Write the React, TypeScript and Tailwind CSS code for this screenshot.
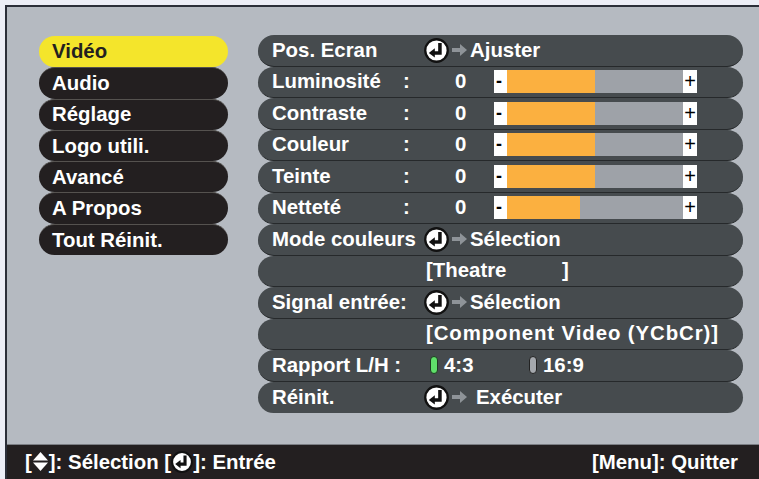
import React from "react";

const menu = ["Vidéo", "Audio", "Réglage", "Logo utili.", "Avancé", "A Propos", "Tout Réinit."];

function EnterIcon({ size = 24 }: { size?: number }) {
  return (
    <svg width={size} height={size} viewBox="0 0 24 24" className="shrink-0">
      <circle cx="12" cy="12" r="10.8" fill="#ffffff" stroke="#111111" strokeWidth="2.2" />
      <path d="M15.3 4.8 V14.3 H9.5" fill="none" stroke="#111111" strokeWidth="3.4" />
      <path d="M4.6 14.3 L10.4 9.8 L10.4 18.8 Z" fill="#111111" />
    </svg>
  );
}

function GrayArrow() {
  return (
    <svg width="17" height="14" viewBox="0 0 17 14" className="shrink-0">
      <rect x="0" y="5" width="9" height="4" fill="#8e9398" />
      <path d="M8 1 L15 7 L8 13 Z" fill="#8e9398" />
    </svg>
  );
}

function UpDown() {
  return (
    <svg width="17" height="21" viewBox="0 0 17 21" className="shrink-0">
      <path d="M8.5 1 L16 9.5 L1 9.5 Z" fill="#ffffff" />
      <path d="M1 11.5 L16 11.5 L8.5 20 Z" fill="#ffffff" />
    </svg>
  );
}

function Row({ children, last }: { children: React.ReactNode; last?: boolean }) {
  return (
    <div
      className={
        "h-[31.5px] rounded-full bg-[#464b4e] flex items-center pl-[14px] text-white " +
        (last ? "" : "border-b border-[#26292b]")
      }
    >
      {children}
    </div>
  );
}

function Slider({ value, fill }: { value: string; fill: number }) {
  return (
    <>
      <span className="w-[52px] shrink-0">:</span>
      <span className="w-[39px] shrink-0">{value}</span>
      <div className="flex h-[23px] w-[203px] shrink-0 items-stretch">
        <div className="w-[13px] bg-white text-black text-[18px] font-bold leading-[23px] pl-[2px]">-</div>
        <div className="bg-[#fbb040]" style={{ width: fill }} />
        <div className="flex-1 bg-[#9ea2a8]" />
        <div className="w-[14px] bg-white text-black text-[20px] font-normal leading-[22px] text-center">+</div>
      </div>
    </>
  );
}

function Action({ label, action, gap }: { label: string; action: string; gap?: boolean }) {
  return (
    <>
      <span className="w-[152px] shrink-0 whitespace-nowrap">{label}</span>
      <EnterIcon size={25} />
      <span className="ml-[3px] flex">
        <GrayArrow />
      </span>
      <span className={gap ? "ml-[7px]" : "ml-[1px]"}>{action}</span>
    </>
  );
}

export default function App() {
  return (
    <div
      className="w-[759px] h-[479px] bg-[#eceef6] pl-[5px] pt-[5px] overflow-hidden"
      style={{ fontFamily: '"Liberation Sans", Arial, sans-serif' }}
    >
      <div className="w-[754px] h-[474px] border-l-2 border-t-2 border-[#2b2e38] bg-[#b5bac1] flex flex-col font-bold text-[20.4px]">
        <div className="flex-1 flex pt-[28px]">
          <div className="ml-[32px] w-[189px] flex flex-col pt-[1px]">
            {menu.map((m, i) => (
              <div
                key={m}
                className={
                  "h-[31.3px] rounded-full flex items-center pl-[13px] " +
                  (i === 0
                    ? "bg-[#f4e52b] text-[#231f20]"
                    : "bg-[#231f20] text-white border-t border-[#55524f]")
                }
              >
                {m}
              </div>
            ))}
          </div>
          <div className="ml-[30px] w-[485px] flex flex-col">
            <Row>
              <Action label="Pos. Ecran" action="Ajuster" />
            </Row>
            <Row>
              <span className="w-[131px] shrink-0">Luminosité</span>
              <Slider value="0" fill={88} />
            </Row>
            <Row>
              <span className="w-[131px] shrink-0">Contraste</span>
              <Slider value="0" fill={88} />
            </Row>
            <Row>
              <span className="w-[131px] shrink-0">Couleur</span>
              <Slider value="0" fill={88} />
            </Row>
            <Row>
              <span className="w-[131px] shrink-0">Teinte</span>
              <Slider value="0" fill={88} />
            </Row>
            <Row>
              <span className="w-[131px] shrink-0">Netteté</span>
              <Slider value="0" fill={73} />
            </Row>
            <Row>
              <Action label="Mode couleurs" action="Sélection" />
            </Row>
            <Row>
              <span className="w-[154px] shrink-0" />
              <span className="w-[136px] shrink-0">[Theatre</span>
              <span>]</span>
            </Row>
            <Row>
              <Action label="Signal entrée:" action="Sélection" />
            </Row>
            <Row>
              <span className="w-[154px] shrink-0" />
              <span className="tracking-[0.9px] whitespace-nowrap">[Component Video (YCbCr)]</span>
            </Row>
            <Row>
              <span className="w-[158px] shrink-0 whitespace-nowrap">Rapport L/H :</span>
              <span className="w-[8px] h-[18px] shrink-0 rounded-full bg-[#5fe06a] border border-[#1d3a20]" />
              <span className="ml-[6px] w-[85px] shrink-0">4:3</span>
              <span className="w-[8px] h-[18px] shrink-0 rounded-full bg-[#a4a8ad] border border-[#222]" />
              <span className="ml-[6px]">16:9</span>
            </Row>
            <Row last>
              <Action label="Réinit." action="Exécuter" gap />
            </Row>
          </div>
        </div>
        <div className="h-[35px] bg-[#231f20] border-t border-[#7b7e84] flex items-center justify-between pl-[18px] pr-[21px] text-white">
          <div className="flex items-center">
            <span>[</span>
            <UpDown />
            <span>]: Sélection [</span>
            <EnterIcon size={22} />
            <span>]: Entrée</span>
          </div>
          <span>[Menu]: Quitter</span>
        </div>
      </div>
    </div>
  );
}
